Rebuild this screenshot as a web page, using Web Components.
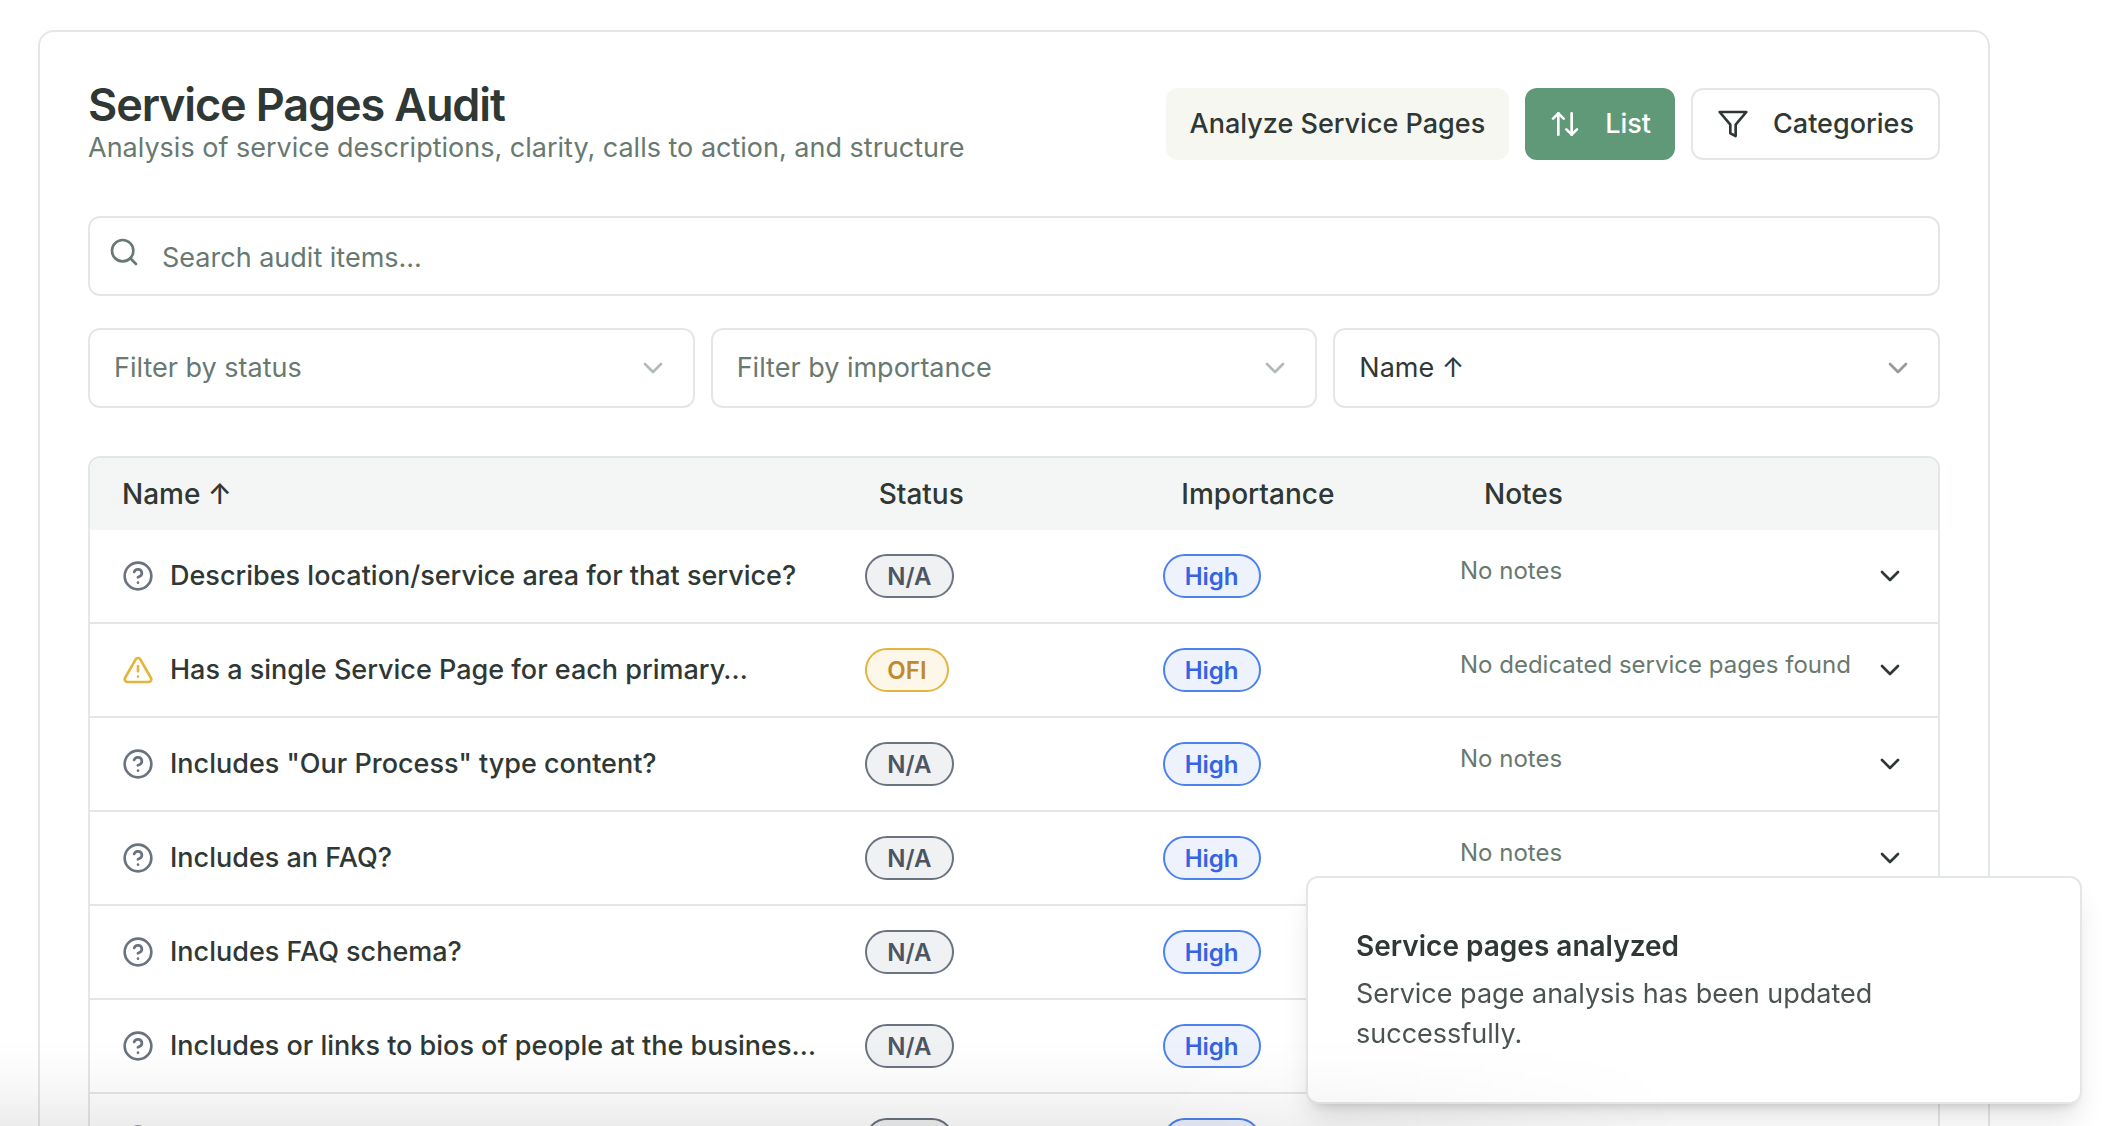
<!DOCTYPE html>
<html lang="en">
<head>
<meta charset="utf-8">
<title>Service Pages Audit</title>
<style>
  :root {
    --ink: #2f3834;
    --muted: #687970;
    --line: #e3e7e6;
    --head: #f4f6f5;
    --green: #5f9977;
    --cream: #f7f7f2;
  }
  * { box-sizing: border-box; }
  html, body { height: 100%; }
  body {
    margin: 0;
    overflow: hidden;
    background: #fff;
    color: var(--ink);
    font: 400 27px/40px Inter, "Liberation Sans", sans-serif;
  }
</style>
</head>
<body>
<audit-page>
  <audit-card>
    <audit-header slot="header">
      <span slot="title">Service Pages Audit</span>
      <span slot="subtitle">Analysis of service descriptions, clarity, calls to action, and structure</span>
      <audit-button slot="actions" variant="soft">Analyze Service Pages</audit-button>
      <audit-button slot="actions" variant="primary" icon="sort">List</audit-button>
      <audit-button slot="actions" variant="outline" icon="filter">Categories</audit-button>
    </audit-header>
    <audit-search placeholder="Search audit items..."></audit-search>
    <filter-bar></filter-bar>
    <audit-table></audit-table>
  </audit-card>
</audit-page>
<audit-toast>
  <span slot="title">Service pages analyzed</span>
  Service page analysis has been updated successfully.
</audit-toast>
<edge-shade></edge-shade>

<script>
const ICONS = {
  sort: '<path d="m3 8 4-4 4 4"/><path d="M7 4v16"/><path d="m21 16-4 4-4-4"/><path d="M17 20V4"/>',
  filter: '<polygon points="22 3 2 3 10 12.46 10 19 14 21 14 12.46 22 3"/>',
  search: '<circle cx="11" cy="11" r="8"/><path d="m21 21-4.3-4.3"/>',
  chevron: '<path d="m6 9 6 6 6-6"/>',
  help: '<circle cx="12" cy="12" r="10"/><path d="M9.09 9a3 3 0 0 1 5.83 1c0 2-3 3-3 3"/><path d="M12 17h.01"/>',
  warning: '<path d="m21.73 18-8-14a2 2 0 0 0-3.48 0l-8 14A2 2 0 0 0 4 21h16a2 2 0 0 0 1.73-3Z"/><path d="M12 9v4"/><path d="M12 17h.01"/>'
};

function define(name, html) {
  customElements.define(name, class extends HTMLElement {
    connectedCallback() {
      if (this.shadowRoot) return;
      const root = this.attachShadow({ mode: 'open' });
      root.innerHTML = '<style>*{box-sizing:border-box}:host{box-sizing:border-box}</style>' +
        (typeof html === 'function' ? html(this) : html);
    }
  });
}

define('audit-icon', el => `
  <style>
    :host { display: block; flex: none; width: 32px; height: 32px; }
    svg { display: block; width: 100%; height: 100%; }
  </style>
  <svg viewBox="0 0 24 24" fill="none" stroke="currentColor" stroke-width="2"
    stroke-linecap="round" stroke-linejoin="round" aria-hidden="true">${ICONS[el.getAttribute('name')]}</svg>`);

define('audit-page', `
  <style>
    :host { display: block; height: 100%; overflow: hidden; padding: 30px 112px 0 38px; }
  </style>
  <slot></slot>`);

define('audit-card', `
  <style>
    :host { display: block; border: 2px solid var(--line); border-radius: 16px; padding: 48px; background: #fff; }
    main { display: flex; flex-direction: column; }
    ::slotted(audit-search) { margin-top: 48px; }
    ::slotted(filter-bar) { margin-top: 32px; }
    ::slotted(audit-table) { margin-top: 48px; }
  </style>
  <main><slot name="header"></slot><slot></slot></main>`);

define('audit-header', `
  <style>
    :host { display: flex; align-items: center; justify-content: space-between; gap: 32px; }
    h1 { margin: 0; padding-top: 2px; font-size: 45px; line-height: 46px; font-weight: 600; letter-spacing: -0.025em; }
    p { margin: 0; color: var(--muted); }
    nav { display: flex; gap: 16px; }
  </style>
  <div><h1><slot name="title"></slot></h1><p><slot name="subtitle"></slot></p></div>
  <nav><slot name="actions"></slot></nav>`);

define('audit-button', el => `
  <style>
    :host { display: block; }
    button {
      display: flex; align-items: center; gap: 24px; height: 72px; padding: 0 24px;
      border: 0; border-radius: 12px; font: inherit; font-weight: 500; color: var(--ink); white-space: nowrap;
    }
    .soft { background: var(--cream); }
    .primary { background: var(--green); color: #fff; }
    .outline { background: #fff; border: 2px solid var(--line); }
  </style>
  <button type="button" class="${el.getAttribute('variant')}">
    ${el.hasAttribute('icon') ? `<audit-icon name="${el.getAttribute('icon')}"></audit-icon>` : ''}<span><slot></slot></span>
  </button>`);

define('audit-search', el => `
  <style>
    :host { display: block; }
    label {
      display: flex; align-items: center; gap: 22px; height: 80px; padding: 0 18px;
      border: 2px solid var(--line); border-radius: 12px; color: var(--muted);
    }
    audit-icon { margin-bottom: 8px; }
    input { flex: 1; min-width: 0; height: 76px; border: 0; padding: 2px 0 0; outline: 0; background: none; font: inherit; color: var(--ink); }
    input::placeholder { color: var(--muted); opacity: 1; }
  </style>
  <label><audit-icon name="search"></audit-icon>
    <input type="search" aria-label="Search audit items" placeholder="${el.getAttribute('placeholder')}"></label>`);

define('audit-select', el => `
  <style>
    :host { display: grid; align-items: center; }
    select, audit-icon { grid-area: 1 / 1; }
    select {
      appearance: none; width: 100%; height: 80px; padding: 0 72px 0 24px; background: #fff;
      border: 2px solid var(--line); border-radius: 12px; font: inherit; color: inherit;
    }
    :host([empty]) { color: var(--muted); }
    audit-icon { justify-self: end; margin-right: 26px; opacity: .5; pointer-events: none; }
  </style>
  <select aria-label="${el.getAttribute('label')}"><option>${el.getAttribute('value')}</option></select>
  <audit-icon name="chevron"></audit-icon>`);

define('filter-bar', `
  <style>
    :host { display: grid; grid-template-columns: repeat(3, minmax(0, 1fr)); gap: 16px; }
  </style>
  <audit-select empty label="Status" value="Filter by status"></audit-select>
  <audit-select empty label="Importance" value="Filter by importance"></audit-select>
  <audit-select label="Sort by" value="Name ↑"></audit-select>`);

define('audit-badge', `
  <style>
    :host { display: inline-block; }
    span {
      display: block; height: 44px; padding: 0 20px; border: 2px solid #6b7280; border-radius: 22px;
      background: #f0f1f2; color: #4b5563; font-size: 24px; line-height: 41px; font-weight: 600;
    }
    :host([tone=amber]) span { border-color: #e4b43c; background: #fcf7e8; color: #c08a2c; }
    :host([tone=blue]) span { border-color: #4c82ee; background: #edf2fd; color: #3662e3; }
  </style>
  <span><slot></slot></span>`);

const ITEMS = [
  ['Describes location/service area for that service?', 'N/A', 'No notes'],
  ['Has a single Service Page for each primary…', 'OFI', 'No dedicated service pages found'],
  ['Includes "Our Process" type content?', 'N/A', 'No notes'],
  ['Includes an FAQ?', 'N/A', 'No notes'],
  ['Includes FAQ schema?', 'N/A', ''],
  ['Includes or links to bios of people at the busines…', 'N/A', ''],
  ['', 'N/A', '']
];

define('audit-table', () => `
  <style>
    :host { display: block; border: 2px solid var(--line); border-radius: 12px; overflow: hidden; }
    table, thead, tbody { display: block; }
    tr { display: grid; grid-template-columns: 5fr 2fr 2fr 3fr; align-items: center; }
    th, td { display: block; min-width: 0; padding: 0; text-align: left; }
    thead tr { height: 72px; padding-left: 32px; background: var(--head); }
    th { font-size: 28px; font-weight: 500; padding-right: 32px; }
    tbody tr { padding: 24px 32px; border-bottom: 2px solid var(--line); }
    .name { display: flex; align-items: center; gap: 16px; padding-right: 32px; font-weight: 500; }
    .name span { overflow: hidden; white-space: nowrap; text-overflow: ellipsis; }
    .name audit-icon { color: #6b7280; }
    .name audit-icon[name=warning] { color: #e4b43c; }
    .badge { display: flex; }
    .notes { display: flex; align-items: center; height: 44px; }
    .notes p { flex: 1; align-self: flex-start; margin: 0; font-size: 24px; line-height: 34px; color: var(--muted); white-space: nowrap; }
    button { flex: none; width: 32px; height: 32px; padding: 0; border: 0; background: none; color: var(--ink); }
  </style>
  <table>
    <thead><tr><th>Name ↑</th><th>Status</th><th>Importance</th><th>Notes</th></tr></thead>
    <tbody>${ITEMS.map(([name, status, notes]) => `
      <tr>
        <td class="name"><audit-icon name="${status === 'OFI' ? 'warning' : 'help'}"></audit-icon><span>${name}</span></td>
        <td class="badge"><audit-badge tone="${status === 'OFI' ? 'amber' : 'gray'}">${status}</audit-badge></td>
        <td class="badge"><audit-badge tone="blue">High</audit-badge></td>
        <td class="notes"><p>${notes}</p><button type="button" aria-label="Expand"><audit-icon name="chevron"></audit-icon></button></td>
      </tr>`).join('')}
    </tbody>
  </table>`);

define('audit-toast', `
  <style>
    :host {
      position: fixed; right: 20px; bottom: 22px; width: 776px; padding: 48px;
      border: 2px solid var(--line); border-radius: 12px; background: #fff;
      box-shadow: 0 20px 30px -6px rgba(0,0,0,.12), 0 8px 12px -8px rgba(0,0,0,.2);
    }
    h2 { margin: 0 0 8px; font-size: 28px; line-height: 40px; font-weight: 600; }
    p { margin: 0; max-width: 560px; color: #4a534f; }
  </style>
  <section role="status"><h2><slot name="title"></slot></h2><p><slot></slot></p></section>`);

define('edge-shade', `
  <style>
    :host {
      position: fixed; left: 0; right: 0; bottom: 0; height: 90px; pointer-events: none;
      background: linear-gradient(to top, rgba(0,0,0,.075), rgba(0,0,0,.03) 40%, rgba(0,0,0,.008) 75%, transparent);
      mask-image: linear-gradient(to right, #000 55%, transparent 80%);
    }
  </style>`);
</script>
</body>
</html>
